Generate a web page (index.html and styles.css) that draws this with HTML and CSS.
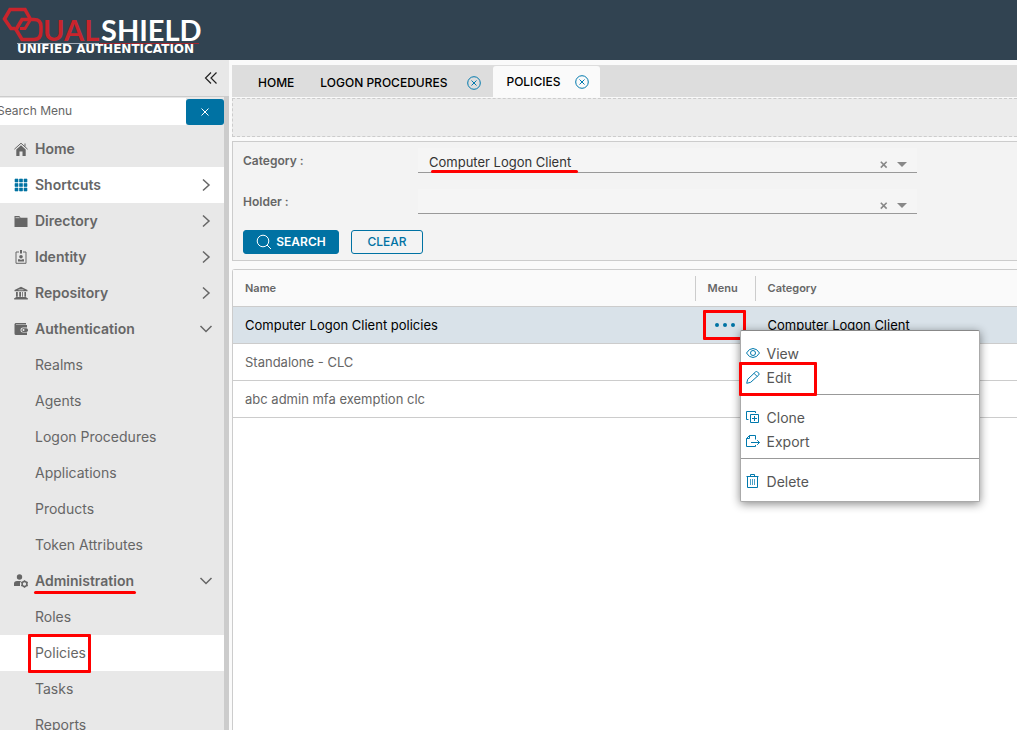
FILE: index.html
```html
<!DOCTYPE html>
<html lang="en">
<head>
<meta charset="utf-8">
<title>DualShield Unified Authentication</title>
<link rel="stylesheet" href="styles.css">
</head>
<body>
<svg class="sprite" aria-hidden="true">
  <symbol id="right" viewBox="0 0 14 14"><path d="M4 1.500 10 7l-6 5.500" fill="none" stroke="currentColor" stroke-width="1.500"/></symbol>
  <symbol id="down" viewBox="0 0 14 14"><path d="M1.500 4 7 9.500 12.500 4" fill="none" stroke="currentColor" stroke-width="1.500"/></symbol>
  <symbol id="cross" viewBox="0 0 10 10"><path d="m1.500 1.500 7 7m0-7-7 7" fill="none" stroke="currentColor"/></symbol>
  <symbol id="cross-bold" viewBox="0 0 10 10"><path d="m2 2 6.500 6.500m0-6.500L2 8.500" fill="none" stroke="currentColor" stroke-width="1.800"/></symbol>
  <symbol id="circle-x" viewBox="0 0 14 14"><circle cx="7" cy="7" r="6.300" fill="none" stroke="currentColor"/><path d="m4.500 4.500 5 5m0-5-5 5" fill="none" stroke="currentColor"/></symbol>
  <symbol id="caret" viewBox="0 0 10 5"><path d="M0 0h10L5 5z" fill="currentColor"/></symbol>
</svg>
<header class="topbar">
  <svg class="logo" viewBox="0 0 204 60" role="img" aria-label="DualShield Unified Authentication">
    <g fill="none" stroke="#c8242c" stroke-width="3.600">
      <path d="M15 28.500h-4L4.500 19 10 9.500h15l5 9"/>
      <path d="M22 19.500h12q7 0 7 7v5q0 8-7 8H22l-6-10z"/>
      <path d="M20 28.500h5l5-8" stroke-width="3"/>
    </g>
    <text class="logo-dual" x="43" y="41">UAL</text>
    <text class="logo-shield" x="101" y="41">SHIELD</text>
    <path d="M17 43.500h82" stroke="#a9b2bd"/><path d="M100 43.500h99" stroke="#a3252d"/>
    <text class="logo-sub" x="17" y="53">UNIFIED AUTHENTICATION</text>
  </svg>
</header>
<div class="shell">
  <aside class="sidebar">
    <div class="collapse-row">
      <button class="plain" aria-label="Collapse menu"><svg width="14" height="14" viewBox="0 0 14 14"><path d="M7 1.500 1.500 7 7 12.500M12.500 1.500 7 7l5.500 5.500" fill="none" stroke="#222" stroke-width="1.200"/></svg></button>
    </div>
    <div class="scroller">
      <div class="menu-search">
        <input type="text" placeholder="Search Menu" aria-label="Search Menu">
        <button aria-label="Clear menu search"><svg width="10" height="10"><use href="#cross"/></svg></button>
      </div>
      <nav class="nav">
        <a href="#" class="group"><svg class="icon" viewBox="0 0 14 14"><path d="M2.300 7.500 7 3.300l4.700 4.200V14H8.500V9.500h-3V14H2.300z" fill="currentColor"/><path d="M.4 7.200 7 1.200l6.600 6M11 1.500v3" fill="none" stroke="currentColor"/></svg><span>Home</span></a>
        <a href="#" class="group active"><svg class="icon blue" viewBox="0 0 14 14"><path d="M1 1h3v3H1zm4.500 0h3v3h-3zM10 1h3v3h-3zM1 5.500h3v3H1zm4.500 0h3v3h-3zm4.500 0h3v3h-3zM1 10h3v3H1zm4.500 0h3v3h-3zm4.500 0h3v3h-3z" fill="currentColor" stroke="currentColor" stroke-width=".6"/></svg><span>Shortcuts</span><svg class="chev"><use href="#right"/></svg></a>
        <a href="#" class="group"><svg class="icon" viewBox="0 0 14 14"><path d="M.5 2h4.800l1.300 1.700h6.900V13H.5z" fill="currentColor"/><path d="M1.500 3.700h4" stroke="#ddd" stroke-width=".8"/></svg><span>Directory</span><svg class="chev"><use href="#right"/></svg></a>
        <a href="#" class="group"><svg class="icon" viewBox="0 0 14 14"><path d="M5 2H2v11.300h10V2H9" fill="none" stroke="currentColor"/><path d="M6 0h2v3.500H6zM4 11.500V9.300h1.800L7 10l1.200-.7H10v2.200z" fill="currentColor"/><circle cx="7" cy="6.800" r="1.800" fill="currentColor"/></svg><span>Identity</span><svg class="chev"><use href="#right"/></svg></a>
        <a href="#" class="group"><svg class="icon" viewBox="0 0 14 14"><path d="M7 .8 13.500 4v1.300H.5V4zM2 6h1.800v4.800H2zm3.200 0H7v4.800H5.200zm3 0H9v4.800h-.8zm2.200 0H12v4.800h-1.600zM1.500 11h11v1h1.300v1.500H.2V12h1.300z" fill="currentColor"/><path d="M4.500 3.800h5" stroke="#ddd" stroke-width=".8"/></svg><span>Repository</span><svg class="chev"><use href="#right"/></svg></a>
        <a href="#" class="group"><svg class="icon" viewBox="0 0 14 14"><path d="M1.500 1H12v1.500H2V3h11v2.500H9a2.500 2.500 0 0 0 0 5h4V13H2A1.500 1.500 0 0 1 .5 11.500V2z" fill="currentColor"/><rect x="7.500" y="6.200" width="6.500" height="3.700" rx="1.700" fill="currentColor"/><circle cx="9.500" cy="8" r="1" fill="#eee"/></svg><span>Authentication</span><svg class="chev"><use href="#down"/></svg></a>
        <a href="#">Realms</a>
        <a href="#">Agents</a>
        <a href="#">Logon Procedures</a>
        <a href="#">Applications</a>
        <a href="#">Products</a>
        <a href="#">Token Attributes</a>
        <a href="#" class="group"><svg class="icon" viewBox="0 0 14 14"><circle cx="5.500" cy="3" r="2.700" fill="currentColor"/><path d="M0 12V9.500Q0 7 3 7h4L6 9v3z" fill="currentColor"/><circle cx="10.500" cy="10" r="2.400" fill="none" stroke="currentColor" stroke-width="1.500"/><path d="M10.500 6.300v1.500m0 4.400v1.500M7.300 8.200l1.200.7m4 2.200 1.200.7m0-3.600-1.200.7m-4 2.200-1.200.7" stroke="currentColor" stroke-width="1.500"/></svg><span class="underlined">Administration</span><svg class="chev"><use href="#down"/></svg></a>
        <a href="#">Roles</a>
        <a href="#" class="active"><span class="boxed">Policies</span></a>
        <a href="#">Tasks</a>
        <a href="#">Reports</a>
      </nav>
    </div>
  </aside>
  <main class="main">
    <div class="tabs">
      <a href="#" class="tab">HOME</a>
      <div class="tab"><a href="#">LOGON PROCEDURES</a><button class="plain" aria-label="Close Logon Procedures"><svg width="14" height="14"><use href="#circle-x"/></svg></button></div>
      <div class="tab current"><a href="#">POLICIES</a><button class="plain" aria-label="Close Policies"><svg width="14" height="14"><use href="#circle-x"/></svg></button></div>
    </div>
    <div class="dropzone"></div>
    <form class="filters">
      <div class="field">
        <label for="category">Category :</label>
        <div class="combo marked">
          <select id="category"><option>Computer Logon Client</option></select>
          <button type="button" class="plain" aria-label="Clear category"><svg width="9" height="9"><use href="#cross-bold"/></svg></button>
          <svg class="caret"><use href="#caret"/></svg>
        </div>
      </div>
      <div class="field">
        <label for="holder">Holder :</label>
        <div class="combo">
          <select id="holder"><option></option></select>
          <button type="button" class="plain" aria-label="Clear holder"><svg width="9" height="9"><use href="#cross-bold"/></svg></button>
          <svg class="caret"><use href="#caret"/></svg>
        </div>
      </div>
      <div class="actions">
        <button type="button" class="btn primary"><svg width="16" height="16" viewBox="0 0 16 16"><circle cx="7" cy="7" r="5.800" fill="none" stroke="currentColor"/><path d="m11 11 4 4" stroke="currentColor"/></svg>SEARCH</button>
        <button type="button" class="btn">CLEAR</button>
      </div>
    </form>
    <div class="grid">
      <table>
        <colgroup><col class="col-name"><col class="col-menu"><col></colgroup>
        <thead><tr><th>Name</th><th>Menu</th><th>Category</th></tr></thead>
        <tbody>
          <tr class="selected"><td>Computer Logon Client policies</td><td class="menu-cell"><button class="plain dots" aria-label="Row menu"><svg width="22" height="6" viewBox="0 0 22 6" fill="#0072a3"><circle cx="3" cy="3" r="2"/><circle cx="11" cy="3" r="2"/><circle cx="19" cy="3" r="2"/></svg></button>
            <div class="popup">
              <div class="section">
                <button><svg viewBox="0 0 14 14"><path d="M.5 6Q3 1.500 7 1.500T13.500 6Q11 10.500 7 10.500T.5 6z"/><circle cx="7" cy="6" r="2.500"/></svg>View</button>
                <button class="edit"><svg viewBox="0 0 14 14"><path d="m.7 12.300 1-4L9.500.9q1-.8 2 0l1.200 1.200q.8 1 0 2L4.700 11.300zM8 2.300l3.300 3.300"/></svg>Edit</button>
              </div>
              <div class="section">
                <button><svg viewBox="0 0 14 14"><path d="M9.500 2V.5h-9v8h2" /><path d="M4.500 3.500h8v8h-8zM8.500 5v5M6 7.500h5"/></svg>Clone</button>
                <button><svg viewBox="0 0 14 14"><path d="M9.500 4.500v-4h-6l-3 3v8h9V10M3.500.5v3h-3M5 7.500h8.500m-2.300-2.300 2.300 2.300-2.300 2.300"/></svg>Export</button>
              </div>
              <div class="section">
                <button><svg viewBox="0 0 14 14"><path d="M.5 1.500h12M4.500 1V-.5h4V1M1.500 1.500v11h10v-11"/><path d="M4.500 4v6M6.500 4v6M8.500 4v6" stroke-width=".7"/></svg>Delete</button>
              </div>
            </div>
          </td><td>Computer Logon Client</td></tr>
          <tr><td>Standalone - CLC</td><td></td><td></td></tr>
          <tr><td>abc admin mfa exemption clc</td><td></td><td></td></tr>
        </tbody>
      </table>
    </div>
  </main>
</div>
</body>
</html>
```
FILE: styles.css
```css
*, *::after { box-sizing: border-box; }
body {
  margin: 0;
  height: 100vh;
  display: flex;
  flex-direction: column;
  overflow: hidden;
  background: #fafafa;
  color: #666;
  font: 13px/24px Inter, "Open Sans", sans-serif;
}
a { color: inherit; text-decoration: none; }
button, input, select { font: inherit; color: inherit; }
button { cursor: pointer; }
.plain { display: flex; padding: 0; border: 0; background: none; }
.sprite { display: none; }

.topbar { flex: none; background: #314351; }
.logo { display: block; width: 204px; height: 60px; }
.logo-dual, .logo-shield { font: 700 29px Lato, sans-serif; fill: #c8242c; }
.logo-shield { fill: #fff; }
.logo-sub { font: 700 12px "DejaVu Sans", sans-serif; fill: #fff; }

.shell { flex: 1; min-height: 0; display: flex; gap: 3px; }
.sidebar { flex: none; width: 229px; display: flex; flex-direction: column; background: #e8e8e8; }
.collapse-row { flex: none; height: 37px; display: flex; justify-content: flex-end; align-items: center; padding: 0 11px; border-bottom: 1px solid #ccc; }
.scroller { flex: 1; min-height: 0; overflow: hidden; border-right: 5px solid #ccc; }
.menu-search { display: flex; height: 28px; padding-top: 1px; margin-bottom: 6px; }
.menu-search input { flex: 1; min-width: 0; padding: 0 0 2px; border: 0; background: #fff; font-size: 12px; text-indent: -3px; }
.menu-search input::placeholder { color: #666; opacity: 1; }
.menu-search button { width: 38px; display: flex; justify-content: center; align-items: center; border: 0; border-radius: 3px; background: #0072a3; color: #fff; margin-top: 1px; }
.nav a { display: flex; align-items: center; height: 36px; padding: 0 11px 0 35px; font-size: 14px; }
.nav .group { gap: 7px; padding-left: 14px; font-weight: 600; }
.nav .active { background: #fff; }
.icon { width: 14px; height: 14px; }
.blue { color: #0072a3; }
.chev { width: 14px; height: 14px; margin-left: auto; }
.underlined, .boxed { position: relative; }
.underlined::after { content: ""; position: absolute; inset: auto -2px -1px -1px; height: 3px; border-radius: 2px; background: #f00; }
.boxed::after { content: ""; position: absolute; inset: -7px -5px -8px -7px; border: 3px solid #f00; border-radius: 1px; }

.main { flex: 1; min-width: 0; display: flex; flex-direction: column; padding-top: 5px; }
.tabs { flex: none; display: flex; height: 32px; padding-left: 14px; background: #ddd; color: #000; font-size: 12px; font-weight: 500; }
.tab { display: flex; align-items: center; gap: 20px; padding: 3px 12px 0; }
.tab + .tab { padding-left: 14px; }
.tab button { color: #0079ad; }
.tab.current { gap: 15px; margin-top: 1px; padding: 0 11px 0 13px; border-radius: 3px 3px 0 0; background: #fafafa; }
.dropzone { flex: none; height: 39px; margin-top: 1px; border: 1px dashed #ccc; border-right: 0; background: #ececec; }
.filters { flex: none; margin-top: 4px; padding: 6px 100px 6px 10px; border: 1px solid #ccc; border-right: 0; background: #f3f3f3; }
.field { display: flex; height: 25px; margin-bottom: 16px; }
.field label { flex: none; width: 175px; font-weight: 600; font-size: 12px; line-height: 26px; }
.combo { position: relative; flex: 1; display: flex; align-items: center; gap: 9px; padding-right: 10px; border-bottom: 1px solid #999; background: #f5f5f5; color: #888; }
.combo select { flex: 1; height: 24px; padding: 4px 0 0 11px; border: 0; appearance: none; background: none; color: #333; line-height: 20px; }
.combo button, .combo .caret { margin-top: 9px; }
.caret { width: 10px; height: 5px; }
.marked::after { content: ""; position: absolute; left: 13px; bottom: -1px; width: 147px; height: 3px; border-radius: 2px; background: #f00; }
.actions { display: flex; gap: 12px; }
.btn { display: flex; align-items: center; justify-content: center; gap: 4px; height: 24px; padding: 0 12px; border: 1px solid #0072a3; border-radius: 3px; background: none; color: #0072a3; font-size: 12px; font-weight: 500; min-width: 72px; }
.primary { min-width: 96px; background: #0072a3; color: #fff; font-weight: 600; }

.grid { flex: 1; margin-top: 8px; border: 1px solid #ccc; border-width: 1px 0 0 1px; border-radius: 3px 0 0; background: #fff; }
table { width: 100%; border-collapse: separate; border-spacing: 0; table-layout: fixed; }
.col-name { width: 59%; }
.col-menu { width: 60px; }
th, td { height: 37px; padding: 0 12px; border-bottom: 1px solid #ccc; text-align: left; }
th { background: linear-gradient(#ccc, #ccc) right center / 1px 25px no-repeat #fafafa; font-size: 11px; font-weight: 600; }
th:last-child { background-image: none; }
.selected { background: #d9e2e9; color: #000; }
.menu-cell { position: relative; padding: 0 7px; }
.dots { width: 43px; height: 30px; padding-left: 2px; align-items: center; justify-content: center; border: 3px solid #f00; border-radius: 1px; }

.popup { position: absolute; z-index: 1; top: 23px; left: 44px; width: 240px; border: 1px solid #aaa; border-top-color: #888; border-radius: 2px; background: #fff; box-shadow: 0 2px 10px #0007; color: #565656; }
.section { padding: 11px 0 4px; }
.section + .section { border-top: 1px solid #999; }
.section:last-child { padding-bottom: 7px; }
.popup button { position: relative; display: flex; align-items: center; gap: 7px; width: 100%; height: 24px; padding: 0 5px; border: 0; background: none; font-size: 14px; }
.popup svg { width: 14px; height: 14px; overflow: visible; fill: none; stroke: #0079ad; }
.edit::after { content: ""; position: absolute; left: -2px; top: -4px; width: 78px; height: 34px; border: 3px solid #f00; border-radius: 1px; }
```
